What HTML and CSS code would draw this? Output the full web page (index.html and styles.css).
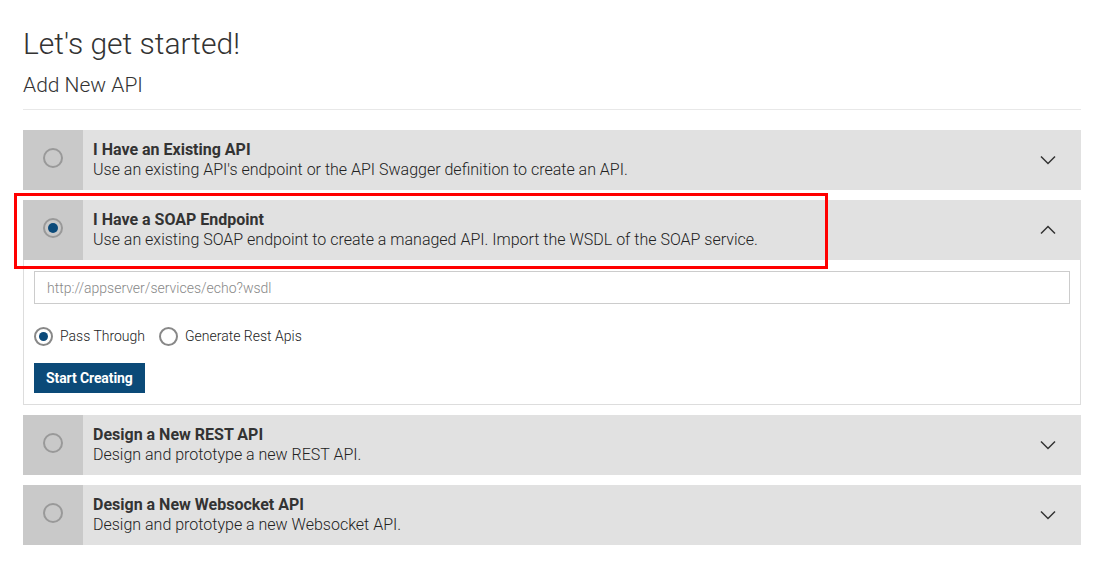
FILE: index.html
```html
<!DOCTYPE html>
<html lang="en">
<head>
<meta charset="utf-8">
<title>Add New API</title>
<link rel="stylesheet" href="styles.css">
</head>
<body>
<div class="page">
  <h1 class="title">Let's get started!</h1>
  <h2 class="subtitle">Add New API</h2>
  <hr class="divider">

  <div class="options">
    <div class="option">
      <div class="option-head">
        <div class="option-radio"><span class="radio"></span></div>
        <div class="option-text">
          <div class="option-title">I Have an Existing API</div>
          <div class="option-desc">Use an existing API's endpoint or the API Swagger definition to create an API.</div>
        </div>
        <div class="option-toggle">
          <svg width="16" height="10" viewBox="0 0 16 10"><polyline points="1,1.5 8,8.5 15,1.5" fill="none" stroke="#333" stroke-width="1.5"/></svg>
        </div>
      </div>
    </div>

    <div class="option open">
      <div class="highlight"></div>
      <div class="option-head">
        <div class="option-radio"><span class="radio checked"></span></div>
        <div class="option-text">
          <div class="option-title">I Have a SOAP Endpoint</div>
          <div class="option-desc">Use an existing SOAP endpoint to create a managed API. Import the WSDL of the SOAP service.</div>
        </div>
        <div class="option-toggle">
          <svg width="16" height="10" viewBox="0 0 16 10"><polyline points="1,8.5 8,1.5 15,8.5" fill="none" stroke="#333" stroke-width="1.5"/></svg>
        </div>
      </div>
      <div class="option-body">
        <input class="url-input" type="text" placeholder="http://appserver/services/echo?wsdl">
        <div class="mode-row">
          <label class="mode"><span class="radio small checked"></span>Pass Through</label>
          <label class="mode"><span class="radio small"></span>Generate Rest Apis</label>
        </div>
        <button class="btn-primary">Start Creating</button>
      </div>
    </div>

    <div class="option">
      <div class="option-head">
        <div class="option-radio"><span class="radio"></span></div>
        <div class="option-text">
          <div class="option-title">Design a New REST API</div>
          <div class="option-desc">Design and prototype a new REST API.</div>
        </div>
        <div class="option-toggle">
          <svg width="16" height="10" viewBox="0 0 16 10"><polyline points="1,1.5 8,8.5 15,1.5" fill="none" stroke="#333" stroke-width="1.5"/></svg>
        </div>
      </div>
    </div>

    <div class="option">
      <div class="option-head">
        <div class="option-radio"><span class="radio"></span></div>
        <div class="option-text">
          <div class="option-title">Design a New Websocket API</div>
          <div class="option-desc">Design and prototype a new Websocket API.</div>
        </div>
        <div class="option-toggle">
          <svg width="16" height="10" viewBox="0 0 16 10"><polyline points="1,1.5 8,8.5 15,1.5" fill="none" stroke="#333" stroke-width="1.5"/></svg>
        </div>
      </div>
    </div>
  </div>
</div>
</body>
</html>
```

FILE: styles.css
```css
* { box-sizing: border-box; }
html, body { margin: 0; padding: 0; background: #fff; }
body {
  font-family: Roboto, "Liberation Sans", Arial, sans-serif;
  color: #333;
}
.page {
  padding: 26px 23px 0 23px;
}
.title {
  margin: 0;
  font-size: 30px;
  line-height: 36px;
  font-weight: 300;
  color: #333;
}
.subtitle {
  margin: 11px 0 0 0;
  font-size: 21px;
  line-height: 24px;
  font-weight: 300;
  color: #333;
}
.divider {
  margin: 12px 0 20px 0;
  border: 0;
  border-top: 1px solid #e8e8e8;
  height: 0;
}
.options {
  display: flex;
  flex-direction: column;
  gap: 10px;
}
.option { position: relative; }
.option-head {
  display: flex;
  height: 60px;
  background: #e1e1e1;
}
.option-radio {
  width: 60px;
  flex: none;
  background: #c9c9c9;
  display: flex;
  align-items: flex-start;
  justify-content: center;
  padding-top: 18px;
}
.radio {
  display: inline-block;
  width: 20px;
  height: 20px;
  border: 2px solid #999;
  border-radius: 50%;
  position: relative;
  flex: none;
}
.radio.checked::after {
  content: "";
  position: absolute;
  left: 3px;
  top: 3px;
  width: 10px;
  height: 10px;
  border-radius: 50%;
  background: #0b4a7a;
}
.option-text {
  flex: 1;
  padding: 10px 0 0 10px;
}
.option-title {
  font-size: 16px;
  line-height: 20px;
  font-weight: 700;
  color: #333;
}
.option-desc {
  font-size: 16px;
  line-height: 20px;
  font-weight: 300;
  color: #222;
}
.option-toggle {
  flex: none;
  display: flex;
  align-items: center;
  padding-right: 25px;
}
.option-body {
  border: 1px solid #ddd;
  border-top: 0;
  padding: 11px 10px 11px 10px;
  background: #fff;
}
.url-input {
  display: block;
  width: 100%;
  height: 33px;
  border: 1px solid #ccc;
  padding: 0 12px;
  font-family: inherit;
  font-size: 14px;
  font-weight: 300;
  color: #333;
  background: #fff;
  outline: none;
}
.url-input::placeholder { color: #888; }
.mode-row {
  display: flex;
  align-items: center;
  gap: 14px;
  margin-top: 22px;
  height: 20px;
}
.mode {
  display: flex;
  align-items: center;
  gap: 7px;
  font-size: 14px;
  font-weight: 300;
  color: #222;
}
.radio.small {
  width: 19px;
  height: 19px;
  border-color: #888;
}
.radio.small.checked::after {
  left: 3px;
  top: 3px;
  width: 9px;
  height: 9px;
}
.btn-primary {
  display: block;
  margin-top: 17px;
  height: 30px;
  padding: 0 12px;
  border: 0;
  background: #0b4a78;
  color: #fff;
  font-family: inherit;
  font-size: 14px;
  font-weight: 700;
  letter-spacing: -0.1px;
}
.highlight {
  position: absolute;
  left: -9px;
  top: -7px;
  width: 814px;
  height: 76px;
  border: 3px solid #f00;
  pointer-events: none;
  z-index: 2;
}
```
